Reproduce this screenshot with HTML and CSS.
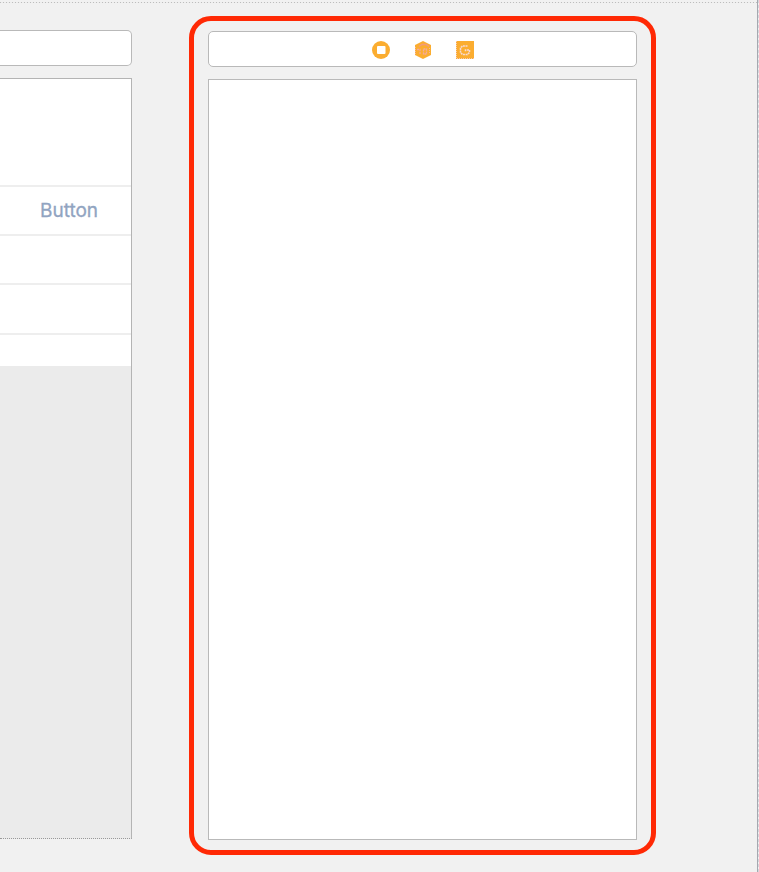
FILE: index.html
```html
<!DOCTYPE html>
<html lang="en">
<head>
<meta charset="utf-8">
<title>Storyboard</title>
<link rel="stylesheet" href="styles.css">
</head>
<body>
<main class="canvas">
  <section class="scene table-scene">
    <div class="dock"></div>
    <div class="table-view">
      <div class="header"></div>
      <div class="row button-row"><span class="button-label">Button</span></div>
      <div class="row"></div>
      <div class="row tall"></div>
      <div class="row last"></div>
    </div>
  </section>
  <section class="highlight">
    <div class="dock icons">
      <svg width="18" height="18" viewBox="0 0 18 18"><circle cx="9" cy="9" r="9" fill="#fbad30"/><rect x="5" y="5" width="8.5" height="8" rx="1" fill="#fff"/></svg>
      <svg width="18" height="18" viewBox="0 0 18 18"><path d="M9 0 17 4v10l-8 4-8-4V4z" fill="#fbad30"/><path d="M5 5.500 8 3.500h4l3 2" fill="none" stroke="#f19a80" stroke-width="1.500"/><path d="M3 8.500h3v5M9.500 8h3v5h-3z" fill="none" stroke="#f5a99a" stroke-width="1.300" stroke-dasharray="2 .7"/><path d="M1.500 6v7M15.500 7v6" stroke="#f5b5a5" stroke-dasharray="1 1"/></svg>
      <svg width="18" height="18" viewBox="0 0 18 18"><path d="M0 0h18v18H0z" fill="#fbad30"/><path d="M.5 0v17.500H18" fill="none" stroke="#f8c9ae" stroke-dasharray="1 1"/><path d="M11.500 5H6.500L4.500 7v4.500l2 2h5l2-2V9H9.500v2" fill="none" stroke="#f6d9d2" stroke-width="1.500" stroke-dasharray="2 .6"/></svg>
    </div>
    <div class="view"></div>
  </section>
</main>
</body>
</html>
```
FILE: styles.css
```css
* { box-sizing: border-box; }
body { margin: 0; background: #f1f1f1; overflow: hidden; }
.canvas {
  display: flex;
  align-items: flex-start;
  height: 872px;
  width: 759px;
  padding-top: 16px;
  border-right: 1px dashed #d5d7dc;
  background:
    linear-gradient(#a5a8b0, #a5a8b0) right top / 1px 100% no-repeat,
    repeating-linear-gradient(90deg, #bdbdbd 0 1px, #ededed 1px 3px) 0 2px / 757px 1px no-repeat,
    #f1f1f1;
}
.scene { width: 132px; margin-right: 57px; padding-top: 14px; }
.dock { height: 36px; border: 1px solid #b9b9b9; border-radius: 5px; background: #fff; }
.table-scene .dock { border-left: 0; border-radius: 0 5px 5px 0; }
.table-view {
  height: 761px;
  margin-top: 12px;
  border: 1px solid #b4b4b4;
  border-left: 0;
  border-bottom: 1px dotted #999;
  background: #ebebeb;
}
.header { height: 108px; background: #fff; border-bottom: 2px solid #eee; }
.row { height: 49px; background: #fff; border-bottom: 2px solid #eee; }
.row.tall { height: 50px; }
.row.last { height: 31px; border-bottom: 0; }
.button-row { padding-left: 40px; }
.button-label {
  display: block;
  font: 19px/47px Inter, sans-serif;
  color: #91a4c1;
  -webkit-text-stroke: .3px #91a4c1;
}
.highlight {
  width: 467px;
  height: 839px;
  padding: 10px 14px;
  border: 5px solid #ff2905;
  border-radius: 22px;
}
.highlight .dock { width: 429px; }
.icons { display: flex; justify-content: center; align-items: center; gap: 24px; padding-top: 1px; }
.view { width: 429px; height: 761px; margin-top: 12px; border: 1px solid #b9b9b9; background: #fff; }
```
